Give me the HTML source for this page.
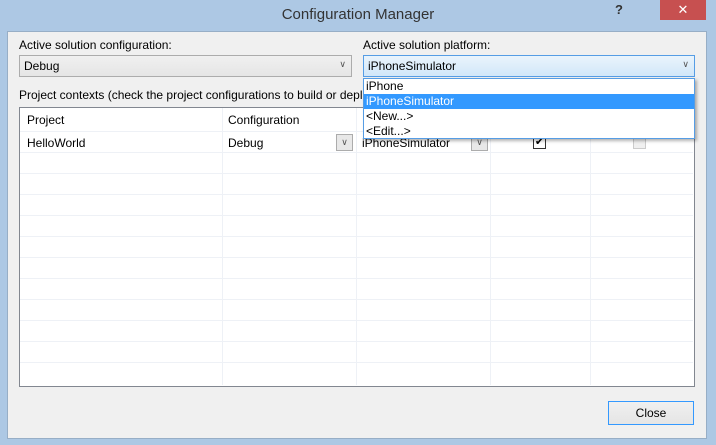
<!DOCTYPE html>
<html><head><style>
*{margin:0;padding:0;box-sizing:border-box}
body{width:716px;height:445px;background:#adc8e4;font-family:"Liberation Sans",sans-serif;font-size:12px;color:#000;position:relative;overflow:hidden}
.a{position:absolute}
.client{left:7px;top:31px;width:700px;height:408px;background:#f0f0f0;border:1px solid #97aec6}
.combo{border:1px solid #acacac;background:linear-gradient(#f0f0f0,#e5e5e5);height:22px;padding:3px 0 0 4px}
.hl{position:absolute;height:1px;background:#eef1f6;left:20px;width:673px}
.vl{position:absolute;width:1px;background:#eef1f6;top:108px;height:277px}
.btn{position:absolute;width:17px;height:17px;border:1px solid #acacac;background:#e8e8e8;font-size:9px;text-align:center;line-height:15px;color:#555}
</style></head><body>
<div class="a" style="left:0;top:6px;width:716px;text-align:center;font-size:15px;color:#333">Configuration Manager</div>
<div class="a" style="left:615px;top:2px;font-size:13px;font-weight:bold;color:#333">?</div>
<div class="a" style="left:660px;top:0;width:46px;height:20px;background:#c75050;color:#fff;text-align:center;font-size:13px;line-height:20px">✕</div>
<div class="a client"></div>
<div class="a" style="left:19px;top:38px">Active solution configuration:</div>
<div class="a" style="left:363px;top:38px">Active solution platform:</div>
<div class="a combo" style="left:19px;top:55px;width:333px">Debug<span class="a" style="right:5px;top:3px;font-size:9px;color:#555">∨</span></div>
<div class="a combo" style="left:363px;top:55px;width:332px;border-color:#569de5;background:linear-gradient(#eaf4fc,#d1e7f9)">iPhoneSimulator<span class="a" style="right:5px;top:3px;font-size:9px;color:#555">∨</span></div>
<div class="a" style="left:19px;top:88px">Project contexts (check the project configurations to build or depl</div>
<div class="a" style="left:19px;top:107px;width:676px;height:280px;background:#fff;border:1px solid #828790"></div>
<div class="vl" style="left:222px"></div><div class="vl" style="left:356px"></div><div class="vl" style="left:490px"></div><div class="vl" style="left:590px"></div>
<div class="hl" style="top:131px"></div><div class="hl" style="top:152px"></div><div class="hl" style="top:173px"></div><div class="hl" style="top:194px"></div><div class="hl" style="top:215px"></div><div class="hl" style="top:236px"></div><div class="hl" style="top:257px"></div><div class="hl" style="top:278px"></div><div class="hl" style="top:299px"></div><div class="hl" style="top:320px"></div><div class="hl" style="top:341px"></div><div class="hl" style="top:362px"></div>
<div class="a" style="left:27px;top:113px">Project</div>
<div class="a" style="left:228px;top:113px">Configuration</div>
<div class="a" style="left:27px;top:136px">HelloWorld</div>
<div class="a" style="left:228px;top:136px">Debug</div>
<div class="btn" style="left:336px;top:134px">∨</div>
<div class="a" style="left:362px;top:136px">iPhoneSimulator</div>
<div class="btn" style="left:471px;top:134px">∨</div>
<div class="a" style="left:533px;top:136px;width:13px;height:13px;border:1px solid #333;background:#fff;font-size:11px;line-height:11px;text-align:center">✔</div>
<div class="a" style="left:633px;top:136px;width:13px;height:13px;border:1px solid #ccc;background:#f0f0f0"></div>
<div class="a" style="left:363px;top:78px;width:332px;height:61px;background:#fff;border:1px solid #569de5;box-shadow:2px 2px 3px rgba(0,0,0,.3)">
<div style="height:15px;padding-left:2px;line-height:15px">iPhone</div>
<div style="height:15px;padding-left:2px;line-height:15px;background:#3399ff;color:#fff">iPhoneSimulator</div>
<div style="height:15px;padding-left:2px;line-height:15px">&lt;New...&gt;</div>
<div style="height:15px;padding-left:2px;line-height:15px">&lt;Edit...&gt;</div>
</div>
<div class="a" style="left:608px;top:401px;width:86px;height:24px;border:1px solid #3399ff;background:linear-gradient(#f0f0f0,#e5e5e5);text-align:center;line-height:22px">Close</div>
</body></html>
